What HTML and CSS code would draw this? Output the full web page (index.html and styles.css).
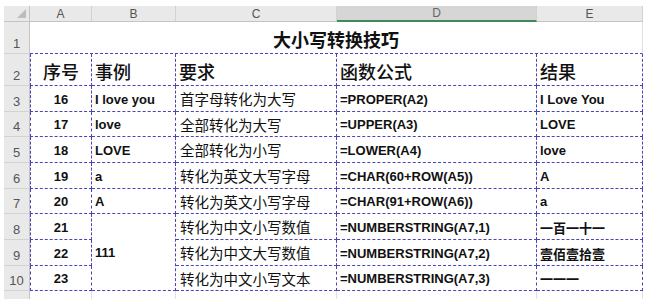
FILE: index.html
```html
<!DOCTYPE html>
<html>
<head>
<meta charset="utf-8">
<link rel="stylesheet" href="styles.css">
</head>
<body>
<div class="sheet">
  <div class="hd corner"><span class="tri"></span></div>
  <div class="hd col">A</div>
  <div class="hd col">B</div>
  <div class="hd col">C</div>
  <div class="hd col sel">D</div>
  <div class="hd col">E</div>

  <div class="rn">1</div>
  <div class="title">大小写转换技巧</div>

  <div class="rn">2</div>
  <div class="c h first ctr">序号</div>
  <div class="c h">事例</div>
  <div class="c h">要求</div>
  <div class="c h">函数公式</div>
  <div class="c h">结果</div>

  <div class="rn">3</div>
  <div class="c first ctr b">16</div>
  <div class="c b">I love you</div>
  <div class="c zh">首字母转化为大写</div>
  <div class="c b">=PROPER(A2)</div>
  <div class="c b">I Love You</div>

  <div class="rn">4</div>
  <div class="c first ctr b">17</div>
  <div class="c b">love</div>
  <div class="c zh">全部转化为大写</div>
  <div class="c b">=UPPER(A3)</div>
  <div class="c b">LOVE</div>

  <div class="rn">5</div>
  <div class="c first ctr b">18</div>
  <div class="c b">LOVE</div>
  <div class="c zh">全部转化为小写</div>
  <div class="c b">=LOWER(A4)</div>
  <div class="c b">love</div>

  <div class="rn">6</div>
  <div class="c first ctr b">19</div>
  <div class="c b">a</div>
  <div class="c zh">转化为英文大写字母</div>
  <div class="c b">=CHAR(60+ROW(A5))</div>
  <div class="c b">A</div>

  <div class="rn">7</div>
  <div class="c first ctr b">20</div>
  <div class="c b">A</div>
  <div class="c zh">转化为英文小写字母</div>
  <div class="c b">=CHAR(91+ROW(A6))</div>
  <div class="c b">a</div>

  <div class="rn">8</div>
  <div class="c first ctr b">21</div>
  <div class="c b merged">111</div>
  <div class="c zh">转化为中文小写数值</div>
  <div class="c b">=NUMBERSTRING(A7,1)</div>
  <div class="c b zb">一百一十一</div>

  <div class="rn">9</div>
  <div class="c first ctr b">22</div>
  <div class="c zh">转化为中文大写数值</div>
  <div class="c b">=NUMBERSTRING(A7,2)</div>
  <div class="c b zb">壹佰壹拾壹</div>

  <div class="rn">10</div>
  <div class="c first ctr b">23</div>
  <div class="c zh">转化为中文小写文本</div>
  <div class="c b">=NUMBERSTRING(A7,3)</div>
  <div class="c b zb">一一一</div>

  <div class="rn"></div>
  <div class="e"></div>
  <div class="e"></div>
  <div class="e"></div>
  <div class="e"></div>
  <div class="e"></div>
</div>
</body>
</html>
```

FILE: styles.css
```css
html, body {
  margin: 0;
  padding: 0;
  background: #ffffff;
}
body {
  padding: 6px 0 0 4px;
  height: 293px;
  overflow: hidden;
}
.sheet {
  display: grid;
  width: 639px;
  grid-template-columns: 26px 62px 84px 161px 200px 106px;
  grid-template-rows: 16px 32px 32px 26px 25px 26px 26px 25px 26px 26px 25px 20px;
  font-family: "Liberation Sans", "Noto Sans CJK SC", sans-serif;
  color: #111;
}
.hd {
  background: #e9e9e9;
  border-right: 1px solid #d2d2d2;
  border-bottom: 1px solid #c4c4c4;
  box-sizing: border-box;
}
.corner {
  position: relative;
  border-right: 1px solid #c4c4c4;
}
.tri {
  position: absolute;
  right: 3px;
  bottom: 3px;
  width: 0;
  height: 0;
  border-left: 9px solid transparent;
  border-bottom: 9px solid #bdbdbd;
}
.col {
  display: flex;
  align-items: center;
  justify-content: center;
  font-size: 12px;
  color: #555;
  font-family: "Liberation Sans", sans-serif;
}
.col.sel {
  background: #d6d6d6;
  border-bottom: 2px solid #3f8a5c;
  color: #666;
}
.rn {
  background: #e9e9e9;
  border-right: 1px solid #c4c4c4;
  border-bottom: 1px solid #d2d2d2;
  box-sizing: border-box;
  display: flex;
  align-items: flex-end;
  justify-content: center;
  font-size: 13px;
  color: #555;
  padding-bottom: 2px;
  font-family: "Liberation Sans", sans-serif;
}
.title {
  grid-column: span 5;
  display: flex;
  align-items: center;
  justify-content: center;
  font-family: "Noto Sans CJK SC", sans-serif;
  font-weight: 700;
  font-size: 18px;
  border-bottom: 1px dashed #4a44b8;
  border-right: 1px solid #e2e2e2;
  padding-top: 2px;
  box-sizing: border-box;
}
.c {
  border-right: 1px dashed #4a44b8;
  border-bottom: 1px dashed #4a44b8;
  box-sizing: border-box;
  display: flex;
  align-items: center;
  padding-left: 3px;
  white-space: nowrap;
  overflow: hidden;
}
.c.first {
  border-left: 1px dashed #4a44b8;
}
.ctr {
  justify-content: center;
  padding-left: 0;
}
.h {
  font-family: "Noto Sans CJK SC", sans-serif;
  font-weight: 500;
  font-size: 18px;
  padding-top: 3px;
}
.b {
  font-weight: 700;
  font-size: 13px;
  padding-top: 1px;
}
.zh {
  font-family: "Noto Sans CJK SC", sans-serif;
  font-size: 14.5px;
  padding-left: 4px;
}
.zb {
  font-family: "Noto Sans CJK SC", sans-serif;
  font-size: 13px;
}
.merged {
  grid-row: span 3;
}
.e {
  border-right: 1px solid #e2e2e2;
}
```
